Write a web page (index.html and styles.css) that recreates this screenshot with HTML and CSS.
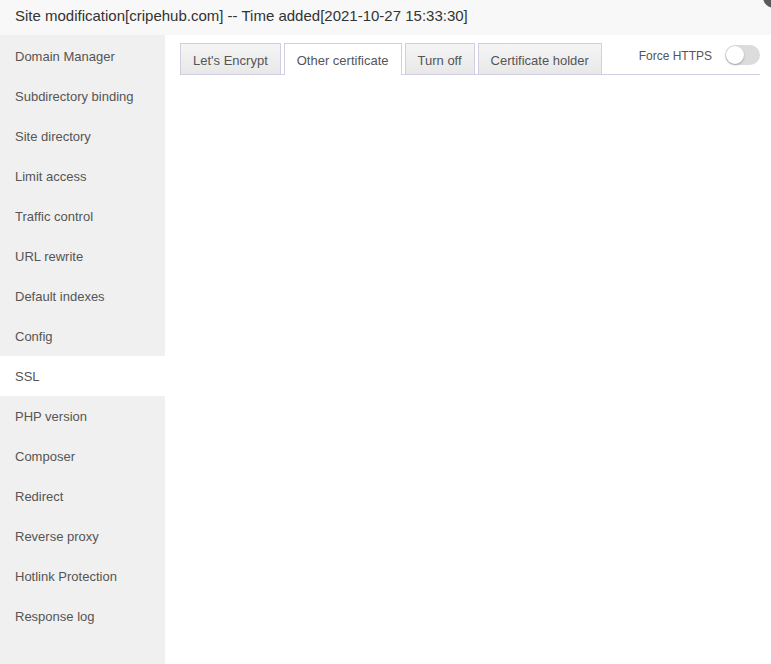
FILE: index.html
```html
<!DOCTYPE html>
<html>
<head>
<meta charset="utf-8">
<link rel="stylesheet" href="styles.css">
</head>
<body>
<div class="dialog">
  <div class="title">Site modification[cripehub.com] -- Time added[2021-10-27 15:33:30]</div>
  <span class="close"></span>
  <div class="main">
    <ul class="menu">
      <li>Domain Manager</li>
      <li>Subdirectory binding</li>
      <li>Site directory</li>
      <li>Limit access</li>
      <li>Traffic control</li>
      <li>URL rewrite</li>
      <li>Default indexes</li>
      <li>Config</li>
      <li class="active">SSL</li>
      <li>PHP version</li>
      <li>Composer</li>
      <li>Redirect</li>
      <li>Reverse proxy</li>
      <li>Hotlink Protection</li>
      <li>Response log</li>
    </ul>
    <div class="content">
      <div class="tabbar">
        <div class="tab">Let's Encrypt</div>
        <div class="tab on">Other certificate</div>
        <div class="tab">Turn off</div>
        <div class="tab">Certificate holder</div>
        <div class="force">
          <span class="force-label">Force HTTPS</span>
          <span class="switch"><span class="knob"></span></span>
        </div>
      </div>
    </div>
  </div>
</div>
</body>
</html>
```

FILE: styles.css
```css
html, body {
  margin: 0;
  padding: 0;
  background: #fff;
  font-family: "Liberation Sans", Arial, sans-serif;
}
.dialog {
  position: relative;
  width: 771px;
  height: 664px;
  overflow: hidden;
  display: flex;
  flex-direction: column;
}
.title {
  height: 35px;
  line-height: 31px;
  padding-left: 15px;
  background: #f8f8f8;
  color: #333;
  font-size: 15px;
  flex: none;
}
.close {
  position: absolute;
  right: -14px;
  top: -14px;
  width: 22px;
  height: 22px;
  border-radius: 50%;
  background: #5a5a5a;
}
.main {
  flex: 1;
  display: flex;
}
.menu {
  list-style: none;
  margin: 0;
  padding: 1px 0 0;
  width: 165px;
  background: #f0f0f0;
  flex: none;
}
.menu li {
  height: 40px;
  line-height: 42px;
  padding-left: 15px;
  font-size: 13px;
  color: #555;
}
.menu li.active {
  background: #fff;
}
.content {
  flex: 1;
  padding: 8px 11px 0 15px;
}
.tabbar {
  display: flex;
  align-items: flex-end;
  border-bottom: 1px solid #d3cfe3;
  height: 31px;
}
.tab {
  height: 30px;
  line-height: 34px;
  padding: 0 12px;
  margin-right: 3px;
  border: 1px solid #d3cfe3;
  border-bottom: none;
  background: linear-gradient(#f5f5f5, #e8e8e8);
  font-size: 13px;
  color: #555;
}
.tab.on {
  background: #fff;
  height: 31px;
  margin-bottom: -1px;
}
.force {
  margin-left: auto;
  align-self: flex-start;
  display: flex;
  align-items: center;
  gap: 13px;
  margin-top: 2px;
}
.force-label {
  font-size: 12px;
  color: #555;
  position: relative;
  top: 1px;
}
.switch {
  width: 35px;
  height: 20px;
  border-radius: 10px;
  background: #dcdcdc;
  display: inline-block;
  position: relative;
}
.knob {
  position: absolute;
  left: 1px;
  top: 1px;
  width: 18px;
  height: 18px;
  border-radius: 50%;
  background: #fff;
  box-shadow: 0 1px 2px rgba(0,0,0,0.3);
}
```
